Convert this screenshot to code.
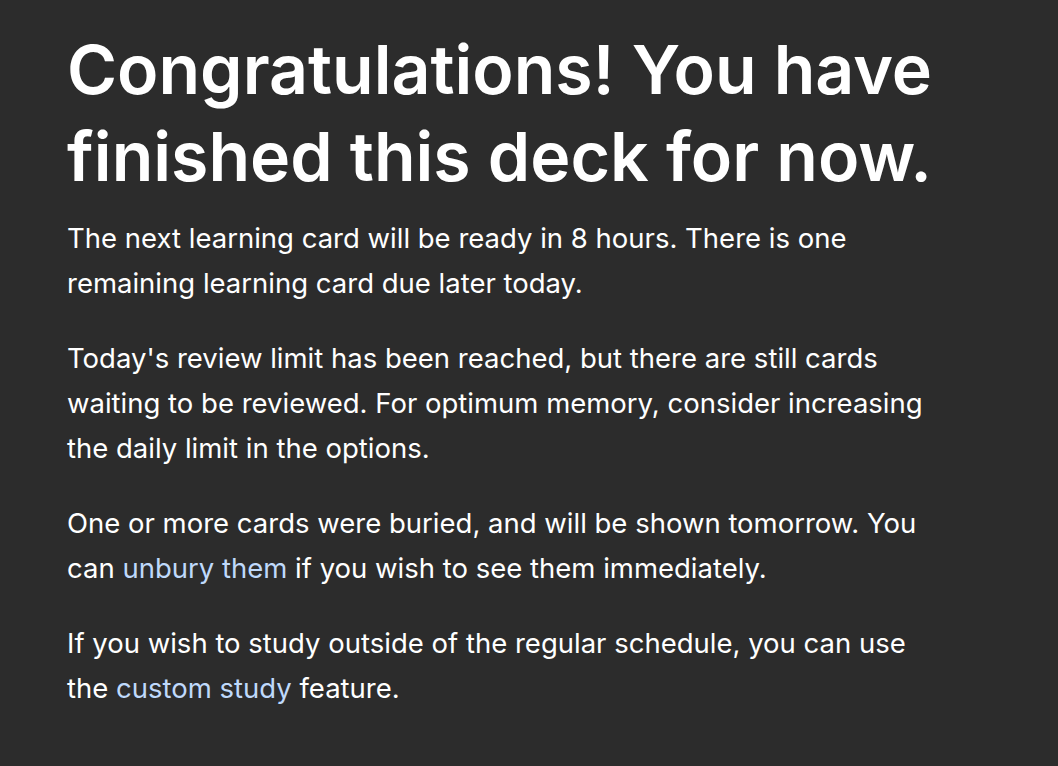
export default function App() {
  return (
    <div
      className="min-h-[766px] bg-[#2c2c2c] text-white pl-[67px] pr-[30px] pt-[26px]"
      style={{ fontFamily: 'Inter, "Noto Sans", sans-serif' }}
    >
      <h1 className="max-w-[900px] text-[68px] leading-[87px] font-semibold">
        Congratulations! You have finished this deck for now.
      </h1>
      <div className="mt-[16px] text-[27.5px] leading-[45px] space-y-[30px]">
        <p>
          The next learning card will be ready in 8 hours. There is one
          <br />
          remaining learning card due later today.
        </p>
        <p>
          Today's review limit has been reached, but there are still cards
          <br />
          waiting to be reviewed. For optimum memory, consider increasing
          <br />
          the daily limit in the options.
        </p>
        <p>
          One or more cards were buried, and will be shown tomorrow. You
          <br />
          can <a href="#" className="text-[#bfd9fb]">unbury them</a> if you
          wish to see them immediately.
        </p>
        <p>
          If you wish to study outside of the regular schedule, you can use
          <br />
          the <a href="#" className="text-[#bfd9fb]">custom study</a> feature.
        </p>
      </div>
    </div>
  );
}
